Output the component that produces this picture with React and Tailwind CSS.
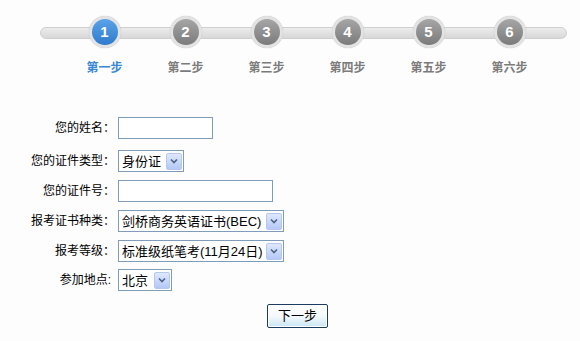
import React from "react";

const steps = ["第一步", "第二步", "第三步", "第四步", "第五步", "第六步"];

const font = { fontFamily: '"Liberation Sans", "Noto Sans CJK SC", sans-serif' };

function Arrow() {
    return (
        <span className="flex h-[17px] w-[16px] items-center justify-center rounded-[2px] border border-[#b7c8f0] bg-gradient-to-b from-[#dfe8fd] to-[#b4c8f6]">
            <svg width="8" height="6" viewBox="0 0 8 6">
                <path d="M1 1.5 L4 4.5 L7 1.5" fill="none" stroke="#4d6185" strokeWidth="1.6" />
            </svg>
        </span>
    );
}

function Select({ value, width }) {
    return (
        <div className={`flex h-[22px] items-center justify-between border border-[#7f9db9] bg-white pl-[3px] pr-[1px] text-[13px] text-black ${width}`}>
            <span className="whitespace-nowrap leading-none">{value}</span>
            <Arrow />
        </div>
    );
}

function Row({ label, children, className, pad = "pr-0" }) {
    return (
        <div className={`flex items-center ${className}`}>
            <div className={`w-[115px] whitespace-nowrap text-right text-[12px] text-black ${pad}`}>{label}</div>
            <div className="ml-[3px]">{children}</div>
        </div>
    );
}

export default function App() {
    return (
        <div className="h-[341px] w-[580px] bg-[#fdfdfd]" style={font}>
            {/* Steps */}
            <div className="relative pt-[16px]">
                <div className="absolute left-[40px] top-[27px] h-[12px] w-[527px] rounded-full border border-[#cfcfcf] bg-gradient-to-b from-[#ececec] to-[#d8d8d8]" />
                <div className="relative ml-[64px] flex">
                    {steps.map((s, i) => (
                        <div key={s} className="flex w-[81px] flex-col items-center">
                            <div className="flex h-[32px] w-[32px] items-center justify-center rounded-full bg-[#e3e3e3] shadow-[0_0_1px_#b0b0b0]">
                                <div
                                    className={`flex h-[26px] w-[26px] items-center justify-center rounded-full text-[15px] font-bold text-white ${
                                        i === 0
                                            ? "bg-gradient-to-b from-[#5aa2e8] to-[#2f7bcc]"
                                            : "bg-gradient-to-b from-[#a6a6a6] to-[#7b7b7b]"
                                    }`}
                                >
                                    {i + 1}
                                </div>
                            </div>
                            <div
                                className={`mt-[13px] text-[12px] font-bold leading-[14px] ${
                                    i === 0 ? "text-[#3a88d4]" : "text-[#7b7b7b]"
                                }`}
                            >
                                {s}
                            </div>
                        </div>
                    ))}
                </div>
            </div>

            {/* Form */}
            <div className="flex flex-col">
                <Row label="您的姓名：" className="mt-[42px]">
                    <div className="h-[22px] w-[95px] border border-[#7f9db9] bg-white" />
                </Row>
                <Row label="您的证件类型：" className="mt-[11px]">
                    <Select value="身份证" width="w-[66px]" />
                </Row>
                <Row label="您的证件号：" className="mt-[8px]">
                    <div className="h-[22px] w-[155px] border border-[#7f9db9] bg-white" />
                </Row>
                <Row label="报考证书种类：" className="mt-[8px]">
                    <Select value="剑桥商务英语证书(BEC)" width="w-[166px]" />
                </Row>
                <Row label="报考等级：" className="mt-[8px]">
                    <Select value="标准级纸笔考(11月24日)" width="w-[166px]" />
                </Row>
                <Row label="参加地点:" className="mt-[7px]" pad="pr-[4px]">
                    <Select value="北京" width="w-[54px]" />
                </Row>
                <div className="mt-[13px] flex pl-[267px]">
                    <button className="h-[24px] w-[61px] rounded-[2px] border border-[#1d3b5e] bg-gradient-to-b from-white via-[#f5f9fc] to-[#c9e6f5] text-[13px] text-black shadow-[inset_0_0_0_1px_#ffffff]">
                        下一步
                    </button>
                </div>
            </div>
        </div>
    );
}
